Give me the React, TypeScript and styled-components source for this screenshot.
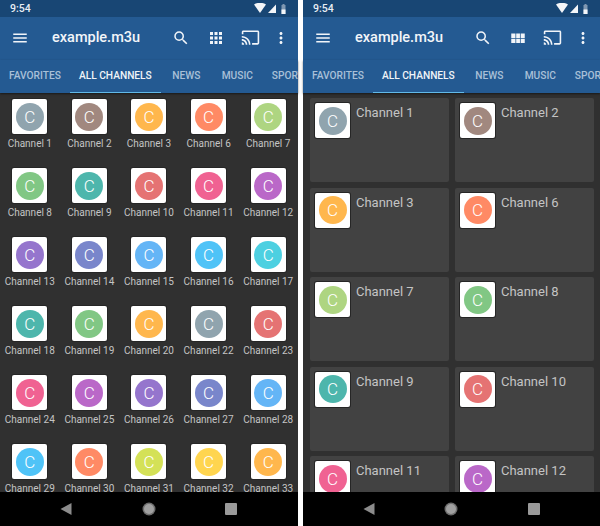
import { FC } from 'react';
import styled, { createGlobalStyle } from 'styled-components';

const Global = createGlobalStyle`
  html, body { margin: 0; padding: 0; background: #fff; }
  body { font-family: Roboto, "Noto Sans", sans-serif; }
`;

const C = {
  grey: '#90a4ae', brown: '#a1887f', orange: '#ffb74d', deep: '#ff8a65', lgreen: '#aed581',
  green: '#81c784', teal: '#4db6ac', red: '#e57373', pink: '#f06292', purple: '#ba68c8',
  dpurple: '#9575cd', indigo: '#7986cb', blue: '#64b5f6', lblue: '#4fc3f7', cyan: '#4dd0e1',
  lime: '#d4e157', yellow: '#ffd54f',
};

type Channel = [string, string];

const gridChannels: Channel[] = [
  ['Channel 1', C.grey], ['Channel 2', C.brown], ['Channel 3', C.orange], ['Channel 6', C.deep], ['Channel 7', C.lgreen],
  ['Channel 8', C.green], ['Channel 9', C.teal], ['Channel 10', C.red], ['Channel 11', C.pink], ['Channel 12', C.purple],
  ['Channel 13', C.dpurple], ['Channel 14', C.indigo], ['Channel 15', C.blue], ['Channel 16', C.lblue], ['Channel 17', C.cyan],
  ['Channel 18', C.teal], ['Channel 19', C.green], ['Channel 20', C.orange], ['Channel 22', C.grey], ['Channel 23', C.red],
  ['Channel 24', C.pink], ['Channel 25', C.purple], ['Channel 26', C.dpurple], ['Channel 27', C.indigo], ['Channel 28', C.blue],
  ['Channel 29', C.lblue], ['Channel 30', C.deep], ['Channel 31', C.lime], ['Channel 32', C.yellow], ['Channel 33', C.orange],
];

const cardChannels: Channel[] = [
  ['Channel 1', C.grey], ['Channel 2', C.brown], ['Channel 3', C.orange], ['Channel 6', C.deep], ['Channel 7', C.lgreen],
  ['Channel 8', C.green], ['Channel 9', C.teal], ['Channel 10', C.red], ['Channel 11', C.pink], ['Channel 12', C.purple],
];

const tabs = ['Favorites', 'All Channels', 'News', 'Music', 'Sports'];

const Page = styled.div`
  display: flex;
  gap: 5px;
  width: 600px;
  height: 526px;
  overflow: hidden;
`;
const Phone = styled.div<{ $w: number }>`
  display: flex;
  flex-direction: column;
  flex: none;
  width: ${(p) => p.$w}px;
  background: #303030;
`;
const StatusBar = styled.div`
  display: flex;
  align-items: center;
  justify-content: space-between;
  box-sizing: border-box;
  height: 17px;
  flex: none;
  padding: 0 10px;
  background: #184674;
  color: #e8eef4;
  font-size: 10.5px;
  font-weight: 500;
`;
const AppBar = styled.div`
  display: flex;
  align-items: center;
  box-sizing: border-box;
  height: 43px;
  flex: none;
  padding: 0 4px 2px 11px;
  background: #245a92;
  color: #fff;
`;
const Title = styled.div`
  flex: 1;
  margin-left: 23px;
  font-size: 14.5px;
  font-weight: 500;
  color: #f2f5f9;
`;
const IconBtn = styled.div<{ $w?: number }>`
  display: flex;
  align-items: center;
  justify-content: center;
  width: ${(p) => p.$w ?? 35}px;
`;
const TabRow = styled.div`
  display: flex;
  box-sizing: border-box;
  height: 33px;
  flex: none;
  overflow: hidden;
  background: #245a92;
  box-shadow: 0 1px 2px rgba(0, 0, 0, 0.5);
  position: relative;
`;
const Tab = styled.div<{ $active?: boolean }>`
  flex: none;
  min-width: 33px;
  padding: 0 9px 1px;
  display: flex;
  align-items: center;
  justify-content: center;
  box-sizing: content-box;
  font-size: 10.2px;
  font-weight: 500;
  text-transform: uppercase;
  white-space: nowrap;
  color: ${(p) => (p.$active ? '#f0f4f8' : '#a9c0d8')};
  border-bottom: 1.5px solid ${(p) => (p.$active ? '#62b9e8' : 'transparent')};
`;
const Content = styled.div`
  flex: 1;
  min-height: 0;
  overflow: hidden;
`;
const ChannelGrid = styled.div`
  display: grid;
  grid-template-columns: repeat(5, 1fr);
  grid-auto-rows: 69px;
  padding-top: 6px;
`;
const GridItem = styled.div`
  display: flex;
  flex-direction: column;
  align-items: center;
`;
const Tile = styled.div`
  width: 35px;
  height: 35px;
  flex: none;
  box-sizing: border-box;
  display: flex;
  align-items: center;
  justify-content: center;
  background: #fff;
  border-radius: 2px;
  box-shadow: 0 0 0 1px #262626;
`;
const Avatar = styled.div<{ $color: string }>`
  width: 28px;
  height: 28px;
  border-radius: 50%;
  background: ${(p) => p.$color};
  color: #fff;
  display: flex;
  align-items: center;
  justify-content: center;
  font-size: 17px;
  font-weight: 300;
`;
const GridLabel = styled.div`
  margin-top: 3px;
  font-size: 10px;
  line-height: 14px;
  color: #c4c4c4;
  white-space: nowrap;
`;
const CardGrid = styled.div`
  display: grid;
  grid-template-columns: 1fr 1fr;
  grid-auto-rows: 84px;
  gap: 5.5px;
  padding: 5px 6px 0 6.5px;
`;
const Card = styled.div`
  display: flex;
  gap: 6px;
  padding: 5px 5.5px;
  background: #424242;
  border-radius: 2px;
`;
const CardLabel = styled.div`
  font-size: 13px;
  line-height: 20px;
  color: #c4c4c4;
  white-space: nowrap;
`;
const NavBar = styled.div`
  display: grid;
  grid-template-columns: repeat(3, 82.5px);
  justify-content: center;
  justify-items: center;
  align-items: center;
  box-sizing: border-box;
  height: 34px;
  flex: none;
  padding-right: 1px;
  background: #000;
  position: relative;
  z-index: 1;
`;
const StatusIcons = styled.div`
  display: flex;
  align-items: center;
`;

const Ic: FC<{ d: string; size?: number }> = ({ d, size = 18 }) => (
  <svg width={size} height={size} viewBox="0 0 24 24" fill="#f2f5f9">
    <path d={d} />
  </svg>
);

const MENU = 'M3 18h18v-2H3v2zm0-5h18v-2H3v2zm0-7v2h18V6H3z';
const SEARCH = 'M15.5 14h-.79l-.28-.27A6.471 6.471 0 0 0 16 9.5 6.5 6.5 0 1 0 9.5 16c1.61 0 3.09-.59 4.23-1.57l.27.28v.79l5 4.99L20.49 19l-4.99-5zm-6 0C7.01 14 5 11.99 5 9.5S7.01 5 9.5 5 14 7.01 14 9.5 11.99 14 9.5 14z';
const APPS = 'M4 8h4V4H4v4zm6 12h4v-4h-4v4zm-6 0h4v-4H4v4zm0-6h4v-4H4v4zm6 0h4v-4h-4v4zm6-10v4h4V4h-4zm-6 4h4V4h-4v4zm6 6h4v-4h-4v4zm0 6h4v-4h-4v4z';
const MODULE = 'M3 12h5.6V6H3v6zm0 6.5h5.6v-5.5H3v5.500zm6.600 0h5v-5.500h-5v5.500zm6 0H21v-5.500h-5.400v5.500zm-6-6.500h5V6h-5v6zm6-6v6H21V6h-5.400z';
const CAST = 'M21 3H3c-1.1 0-2 .9-2 2v3h2V5h18v14h-7v2h7c1.1 0 2-.9 2-2V5c0-1.1-.9-2-2-2zM1 18v3h3c0-1.66-1.34-3-3-3zm0-4v2c2.76 0 5 2.24 5 5h2c0-3.87-3.13-7-7-7zm0-4v2c4.97 0 9 4.03 9 9h2c0-6.080-4.930-11-11-11z';
const MORE = 'M12 8c1.100 0 2-.9 2-2s-.9-2-2-2-2 .9-2 2 .9 2 2 2zm0 2c-1.100 0-2 .9-2 2s.9 2 2 2 2-.9 2-2-.9-2-2-2zm0 6c-1.100 0-2 .9-2 2s.9 2 2 2 2-.9 2-2-.9-2-2-2z';

const SystemIcons: FC = () => (
  <StatusIcons>
    <svg width="34" height="11" viewBox="0 0 34 11">
      <path d="M0 1.500 C3.500 -0.800 8.500 -0.800 12 1.500 L6 10 Z" fill="#f4f6f9" />
      <path d="M14 10 L22 1.500 V10 Z" fill="#f4f6f9" />
      <path d="M27.500 2 h1 v-1 h2 v1 h1 v9 h-4 z" fill="#7f97b1" />
      <path d="M27.500 6.500 h4 V11 h-4 z" fill="#f4f6f9" />
    </svg>
  </StatusIcons>
);

const Header: FC<{ gridIcon: string }> = ({ gridIcon }) => (
  <>
    <StatusBar>
      <span>9:54</span>
      <SystemIcons />
    </StatusBar>
    <AppBar>
      <Ic d={MENU} />
      <Title>example.m3u</Title>
      <IconBtn><Ic d={SEARCH} /></IconBtn>
      <IconBtn><Ic d={gridIcon} /></IconBtn>
      <IconBtn><Ic d={CAST} size={19} /></IconBtn>
      <IconBtn $w={26}><Ic d={MORE} /></IconBtn>
    </AppBar>
    <TabRow>
      {tabs.map((t) => (
        <Tab key={t} $active={t === 'All Channels'}>{t}</Tab>
      ))}
    </TabRow>
  </>
);

const Nav: FC = () => (
  <NavBar>
    <svg width="12" height="14" viewBox="0 0 12 14"><path d="M11.500 1 V13 L0.500 7 Z" fill="#8c8c8c" /></svg>
    <svg width="14" height="14" viewBox="0 0 14 14">
      <circle cx="7" cy="7" r="6.500" fill="#6e6e6e" />
      <circle cx="7" cy="7" r="5" fill="#a0a0a0" />
    </svg>
    <svg width="12" height="12" viewBox="0 0 12 12"><rect width="12" height="12" rx="1" fill="#9a9a9a" /></svg>
  </NavBar>
);

const Logo: FC<{ color: string }> = ({ color }) => (
  <Tile>
    <Avatar $color={color}>C</Avatar>
  </Tile>
);

export default function App() {
  return (
    <Page>
      <Global />
      <Phone $w={298}>
        <Header gridIcon={APPS} />
        <Content>
          <ChannelGrid>
            {gridChannels.map(([name, color]) => (
              <GridItem key={name}>
                <Logo color={color} />
                <GridLabel>{name}</GridLabel>
              </GridItem>
            ))}
          </ChannelGrid>
        </Content>
        <Nav />
      </Phone>
      <Phone $w={297}>
        <Header gridIcon={MODULE} />
        <Content>
          <CardGrid>
            {cardChannels.map(([name, color]) => (
              <Card key={name}>
                <Logo color={color} />
                <CardLabel>{name}</CardLabel>
              </Card>
            ))}
          </CardGrid>
        </Content>
        <Nav />
      </Phone>
    </Page>
  );
}
